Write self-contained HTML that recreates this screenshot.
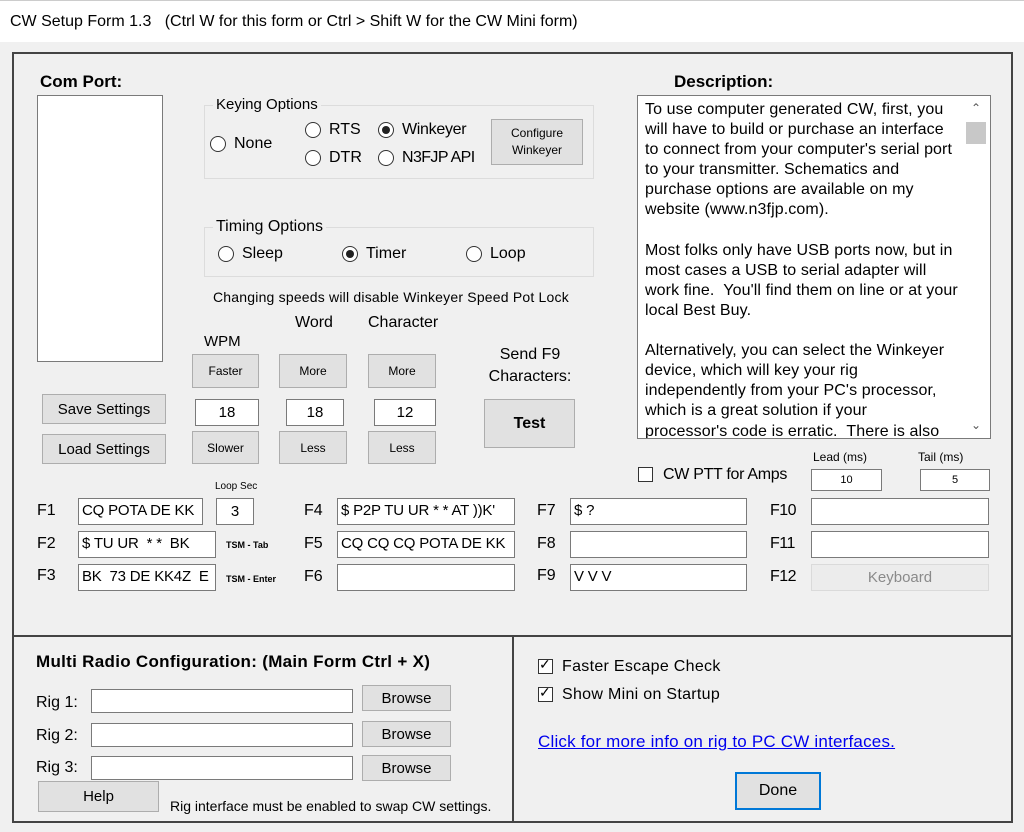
<!DOCTYPE html>
<html><head><meta charset="utf-8"><style>
*{margin:0;padding:0;box-sizing:border-box}
body{width:1024px;height:832px;background:#f0f0f0;font-family:"Liberation Sans",Arial,sans-serif;color:#000;position:relative;overflow:hidden}
.a{position:absolute;white-space:nowrap}
.t{font-size:15px;line-height:18px}
.box{position:absolute;background:#fff;border:1px solid #7a7a7a}
.btn{position:absolute;background:#e1e1e1;border:1px solid #adadad;display:flex;align-items:center;justify-content:center;text-align:center}
.grp{position:absolute;border:1px solid #dcdcdc}
.rad{position:absolute;width:16px;height:16px;border:1px solid #333;border-radius:50%;background:#fff}
.rad.on::after{content:"";position:absolute;left:3px;top:3px;width:8px;height:8px;border-radius:50%;background:#222}
.chk{position:absolute;width:15px;height:15px;border:1px solid #333;background:#fff}
.inp{position:absolute;background:#fff;border:1px solid #7a7a7a;font-size:15px;line-height:24px;padding-left:3px;overflow:hidden;white-space:nowrap;letter-spacing:-0.2px}
</style></head><body>
<div class="a" style="left:0;top:0;width:1024px;height:42px;background:#fff;border-top:1px solid #ccc"></div>
<div class="a" style="left:10px;top:12px;font-size:16px;line-height:19px">CW Setup Form 1.3&nbsp;&nbsp; (Ctrl W for this form or Ctrl &gt; Shift W for the CW Mini form)</div>

<div class="a" style="left:12px;top:52px;width:1001px;height:771px;border:2px solid #444"></div>
<div class="a" style="left:12px;top:635px;width:1001px;height:2px;background:#444"></div>
<div class="a" style="left:512px;top:636px;width:2px;height:186px;background:#444"></div>

<div class="a" style="left:40px;top:72px;font-size:17px;font-weight:bold">Com Port:</div>
<div class="box" style="left:37px;top:95px;width:126px;height:267px"></div>

<div class="grp" style="left:204px;top:105px;width:390px;height:74px"></div>
<div class="a t" style="left:213px;top:96px;background:#f0f0f0;padding:0 3px">Keying Options</div>
<div class="rad" style="left:210px;top:136px"></div><div class="a t" style="left:234px;top:135px;font-size:16px">None</div>
<div class="rad" style="left:305px;top:122px"></div><div class="a t" style="left:329px;top:121px;font-size:16px">RTS</div>
<div class="rad" style="left:305px;top:150px"></div><div class="a t" style="left:329px;top:149px;font-size:16px">DTR</div>
<div class="rad on" style="left:378px;top:122px"></div><div class="a t" style="left:402px;top:121px;font-size:16px;letter-spacing:-0.3px">Winkeyer</div>
<div class="rad" style="left:378px;top:150px"></div><div class="a t" style="left:402px;top:149px;font-size:16px;letter-spacing:-0.6px">N3FJP API</div>
<div class="btn" style="left:491px;top:119px;width:92px;height:46px;font-size:12px;line-height:17px">Configure<br>Winkeyer</div>

<div class="grp" style="left:204px;top:227px;width:390px;height:50px"></div>
<div class="a t" style="left:213px;top:218px;background:#f0f0f0;padding:0 3px;font-size:16px">Timing Options</div>
<div class="rad" style="left:218px;top:246px"></div><div class="a t" style="left:242px;top:245px;font-size:16px">Sleep</div>
<div class="rad on" style="left:342px;top:246px"></div><div class="a t" style="left:366px;top:245px;font-size:16px">Timer</div>
<div class="rad" style="left:466px;top:246px"></div><div class="a t" style="left:490px;top:245px;font-size:16px">Loop</div>

<div class="a" style="left:213px;top:289px;font-size:14px;line-height:16px;letter-spacing:0.2px">Changing speeds will disable Winkeyer Speed Pot Lock</div>
<div class="a t" style="left:295px;top:314px;font-size:16px">Word</div>
<div class="a t" style="left:368px;top:314px;font-size:16px">Character</div>
<div class="a t" style="left:204px;top:333px">WPM</div>
<div class="btn" style="left:192px;top:354px;width:67px;height:34px;font-size:12px">Faster</div>
<div class="btn" style="left:279px;top:354px;width:68px;height:34px;font-size:12px">More</div>
<div class="btn" style="left:368px;top:354px;width:68px;height:34px;font-size:12px">More</div>
<div class="box" style="left:195px;top:399px;width:64px;height:27px;text-align:center;font-size:15px;line-height:25px">18</div>
<div class="box" style="left:286px;top:399px;width:58px;height:27px;text-align:center;font-size:15px;line-height:25px">18</div>
<div class="box" style="left:374px;top:399px;width:62px;height:27px;text-align:center;font-size:15px;line-height:25px">12</div>
<div class="btn" style="left:192px;top:431px;width:67px;height:33px;font-size:12px">Slower</div>
<div class="btn" style="left:279px;top:431px;width:68px;height:33px;font-size:12px">Less</div>
<div class="btn" style="left:368px;top:431px;width:68px;height:33px;font-size:12px">Less</div>
<div class="btn" style="left:42px;top:394px;width:124px;height:30px;font-size:15px">Save Settings</div>
<div class="btn" style="left:42px;top:434px;width:124px;height:30px;font-size:15px">Load Settings</div>
<div class="a" style="left:470px;top:344px;width:120px;text-align:center;font-size:16px;line-height:22px">Send F9<br>Characters:</div>
<div class="btn" style="left:484px;top:399px;width:91px;height:49px;font-size:16px;font-weight:bold">Test</div>

<div class="a" style="left:674px;top:72px;font-size:17px;font-weight:bold">Description:</div>
<div class="box" style="left:637px;top:95px;width:354px;height:344px;overflow:hidden">
<div class="a" style="left:7px;top:4px;font-size:16px;line-height:20.1px;letter-spacing:0.1px;white-space:pre">To use computer generated CW, first, you
will have to build or purchase an interface
to connect from your computer's serial port
to your transmitter. Schematics and
purchase options are available on my
website (www.n3fjp.com).

Most folks only have USB ports now, but in
most cases a USB to serial adapter will
work fine.  You'll find them on line or at your
local Best Buy.

Alternatively, you can select the Winkeyer
device, which will key your rig
independently from your PC's processor,
which is a great solution if your
processor's code is erratic.  There is also</div>
<div class="a" style="left:327px;top:0;width:25px;height:342px;background:#fff"></div>
<div class="a" style="left:328px;top:26px;width:20px;height:22px;background:#c8c8c8"></div>
<div class="a" style="left:333px;top:5px;font-size:12px;color:#555">&#8963;</div>
<div class="a" style="left:333px;top:322px;font-size:12px;color:#555">&#8964;</div>
</div>

<div class="chk" style="left:638px;top:467px"></div>
<div class="a t" style="left:663px;top:466px;font-size:16px;letter-spacing:-0.3px">CW PTT for Amps</div>
<div class="a" style="left:813px;top:450px;font-size:12px">Lead (ms)</div>
<div class="a" style="left:918px;top:450px;font-size:12px">Tail (ms)</div>
<div class="box" style="left:811px;top:469px;width:71px;height:22px;text-align:center;font-size:11px;line-height:20px">10</div>
<div class="box" style="left:920px;top:469px;width:70px;height:22px;text-align:center;font-size:11px;line-height:20px">5</div>

<div class="a t" style="left:37px;top:502px;font-size:16px">F1</div>
<div class="a t" style="left:37px;top:535px;font-size:16px">F2</div>
<div class="a t" style="left:37px;top:567px;font-size:16px">F3</div>
<div class="inp" style="left:78px;top:498px;width:125px;height:27px">CQ POTA DE KK</div>
<div class="inp" style="left:78px;top:531px;width:138px;height:27px">$ TU UR&nbsp; * *&nbsp; BK</div>
<div class="inp" style="left:78px;top:564px;width:138px;height:27px">BK&nbsp; 73 DE KK4Z&nbsp; E</div>
<div class="a" style="left:215px;top:481px;font-size:10px">Loop Sec</div>
<div class="box" style="left:216px;top:498px;width:38px;height:27px;text-align:center;font-size:15px;line-height:25px">3</div>
<div class="a" style="left:226px;top:540px;font-size:9px;font-weight:bold">TSM - Tab</div>
<div class="a" style="left:226px;top:574px;font-size:9px;font-weight:bold">TSM - Enter</div>

<div class="a t" style="left:304px;top:502px;font-size:16px">F4</div>
<div class="a t" style="left:304px;top:535px;font-size:16px">F5</div>
<div class="a t" style="left:304px;top:568px;font-size:16px">F6</div>
<div class="inp" style="left:337px;top:498px;width:178px;height:27px">$ P2P TU UR * * AT ))K'</div>
<div class="inp" style="left:337px;top:531px;width:178px;height:27px">CQ CQ CQ POTA DE KK</div>
<div class="inp" style="left:337px;top:564px;width:178px;height:27px"></div>

<div class="a t" style="left:537px;top:502px;font-size:16px">F7</div>
<div class="a t" style="left:537px;top:535px;font-size:16px">F8</div>
<div class="a t" style="left:537px;top:567px;font-size:16px">F9</div>
<div class="inp" style="left:570px;top:498px;width:177px;height:27px">$ ?</div>
<div class="inp" style="left:570px;top:531px;width:177px;height:27px"></div>
<div class="inp" style="left:570px;top:564px;width:177px;height:27px">V V V</div>

<div class="a t" style="left:770px;top:502px;font-size:16px;letter-spacing:-0.5px">F10</div>
<div class="a t" style="left:770px;top:535px;font-size:16px;letter-spacing:-0.5px">F11</div>
<div class="a t" style="left:770px;top:568px;font-size:16px;letter-spacing:-0.5px">F12</div>
<div class="inp" style="left:811px;top:498px;width:178px;height:27px"></div>
<div class="inp" style="left:811px;top:531px;width:178px;height:27px"></div>
<div class="btn" style="left:811px;top:564px;width:178px;height:27px;background:#ececec;border-color:#dadada;color:#8a8a8a;font-size:15px">Keyboard</div>

<div class="a" style="left:36px;top:652px;font-size:17px;font-weight:bold;letter-spacing:0.3px">Multi Radio Configuration: (Main Form Ctrl + X)</div>
<div class="a t" style="left:36px;top:694px;font-size:16px">Rig 1:</div>
<div class="a t" style="left:36px;top:727px;font-size:16px">Rig 2:</div>
<div class="a t" style="left:36px;top:759px;font-size:16px">Rig 3:</div>
<div class="box" style="left:91px;top:689px;width:262px;height:24px"></div>
<div class="box" style="left:91px;top:723px;width:262px;height:24px"></div>
<div class="box" style="left:91px;top:756px;width:262px;height:24px"></div>
<div class="btn" style="left:362px;top:685px;width:89px;height:26px;font-size:15px">Browse</div>
<div class="btn" style="left:362px;top:721px;width:89px;height:26px;font-size:15px">Browse</div>
<div class="btn" style="left:362px;top:755px;width:89px;height:26px;font-size:15px">Browse</div>
<div class="btn" style="left:38px;top:781px;width:121px;height:31px;font-size:15px">Help</div>
<div class="a" style="left:170px;top:798px;font-size:14px;letter-spacing:0">Rig interface must be enabled to swap CW settings.</div>

<div class="chk" style="left:538px;top:659px"></div>
<div class="a" style="left:539px;top:656px;font-size:14px">&#10003;</div>
<div class="a t" style="left:562px;top:658px;font-size:16px;letter-spacing:0.3px">Faster Escape Check</div>
<div class="chk" style="left:538px;top:687px"></div>
<div class="a" style="left:539px;top:684px;font-size:14px">&#10003;</div>
<div class="a t" style="left:562px;top:686px;font-size:16px;letter-spacing:0.3px">Show Mini on Startup</div>
<div class="a t" style="left:538px;top:733px;font-size:17px;color:#0000ee;text-decoration:underline;letter-spacing:0.2px">Click for more info on rig to PC CW interfaces.</div>
<div class="btn" style="left:735px;top:772px;width:86px;height:38px;border:2px solid #0078d7;font-size:16px">Done</div>
</body></html>
